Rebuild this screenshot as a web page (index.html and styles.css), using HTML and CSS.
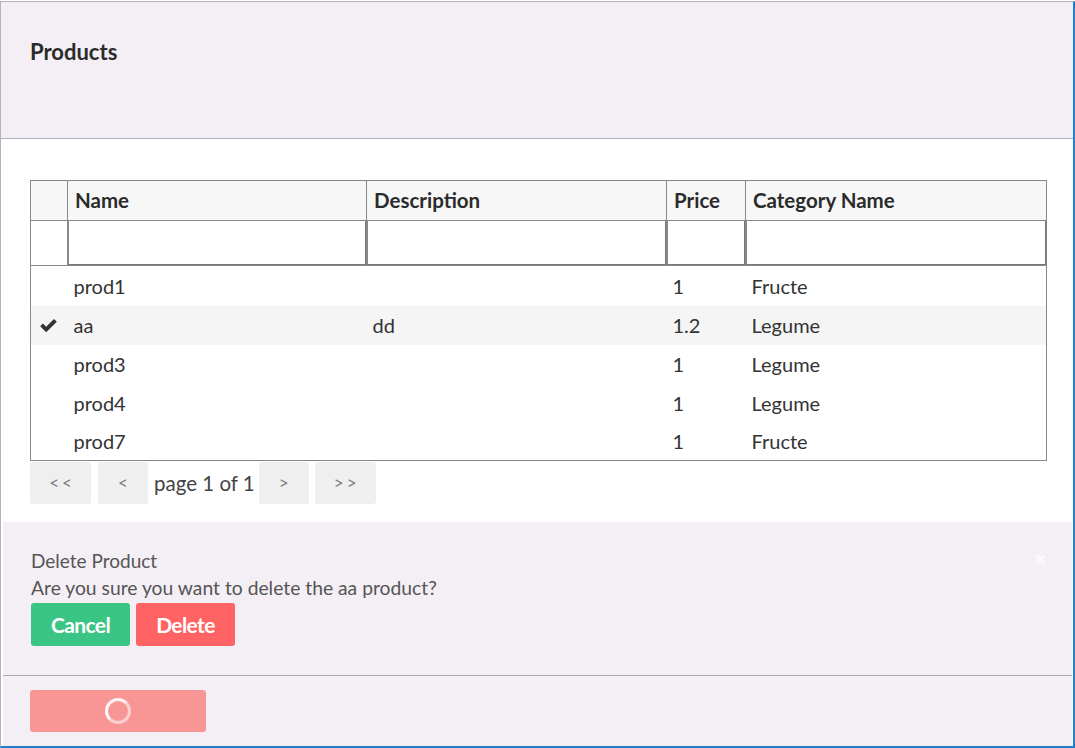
FILE: index.html
```html
<!DOCTYPE html>
<html>
<head>
<meta charset="utf-8">
<link rel="stylesheet" href="styles.css">
</head>
<body>
<div class="frame">
  <header class="page-head">
    <h1 class="title">Products</h1>
  </header>
  <main class="content">
    <table class="grid">
      <colgroup>
        <col class="c-sel"><col class="c-name"><col class="c-desc"><col class="c-price"><col class="c-cat">
      </colgroup>
      <thead>
        <tr class="head-row">
          <th></th><th>Name</th><th>Description</th><th>Price</th><th>Category Name</th>
        </tr>
        <tr class="filter-row">
          <th></th>
          <th><div class="filter"></div></th>
          <th><div class="filter"></div></th>
          <th><div class="filter"></div></th>
          <th><div class="filter"></div></th>
        </tr>
      </thead>
      <tbody>
        <tr class="first"><td></td><td>prod1</td><td></td><td>1</td><td>Fructe</td></tr>
        <tr class="selected"><td class="check"><svg width="19" height="15" viewBox="0 0 19 15"><path d="M1.2 8.2 L3.9 5.4 L7.2 8.7 L15 0.9 L17.8 3.7 L7.2 14.2 Z" fill="#333"/></svg></td><td>aa</td><td>dd</td><td>1.2</td><td>Legume</td></tr>
        <tr><td></td><td>prod3</td><td></td><td>1</td><td>Legume</td></tr>
        <tr><td></td><td>prod4</td><td></td><td>1</td><td>Legume</td></tr>
        <tr class="last"><td></td><td>prod7</td><td></td><td>1</td><td>Fructe</td></tr>
      </tbody>
    </table>
    <div class="pager">
      <button class="pg pg-wide">&lt;&lt;</button>
      <button class="pg pg-mid">&lt;</button>
      <span class="pg-text">page 1 of 1</span>
      <button class="pg pg-mid">&gt;</button>
      <button class="pg pg-wide">&gt;&gt;</button>
    </div>
  </main>
  <section class="dialog">
    <div class="dialog-body">
      <div class="dlg-title">Delete Product</div>
      <div class="dlg-text">Are you sure you want to delete the aa product?</div>
      <div class="dlg-actions">
        <button class="btn btn-cancel">Cancel</button>
        <button class="btn btn-delete">Delete</button>
      </div>
      <span class="close">&#x2716;</span>
    </div>
    <div class="dialog-foot">
      <button class="btn-busy"><span class="spinner"></span></button>
    </div>
  </section>
</div>
</body>
</html>
```
FILE: styles.css
```css
* { box-sizing: border-box; }
html, body { margin: 0; padding: 0; background: #fff; }
body {
  font-family: Lato, "Open Sans", sans-serif;
  color: #333;
  width: 1075px;
  height: 748px;
  overflow: hidden;
}
.frame {
  width: 1075px;
  height: 747px;
  margin-top: 1px;
  border-top: 1px solid #b4b4b4;
  border-left: 1px solid #b4b4b4;
  border-right: 2px solid #1f7ed0;
  border-bottom: 2px solid #1f7ed0;
  display: flex;
  flex-direction: column;
  position: relative;
}
.page-head {
  height: 137px;
  background: #f4eff5;
  border-top: 2px solid #efefef;
  border-bottom: 1px solid #b0b0b8;
  padding: 34px 0 0 29px;
}
.title {
  margin: 0;
  font-size: 22px;
  font-weight: 700;
  color: #2b2b2b;
  line-height: 28px;
}
.content {
  padding: 41px 0 0 29px;
}
.grid {
  border-collapse: collapse;
  width: 1017px;
  table-layout: fixed;
  font-size: 20px;
  border: 1px solid #888;
}
.c-sel { width: 37px; }
.c-name { width: 299px; }
.c-desc { width: 300px; }
.c-price { width: 79px; }
.c-cat { width: 301px; }
.head-row th {
  background: #f7f7f7;
  height: 40px;
  text-align: left;
  font-weight: 700;
  font-size: 20.5px;
  color: #2b2b2b;
  padding: 0 0 1px 7px;
  border: 1px solid #888;
}
.filter-row th {
  height: 45px;
  padding: 0;
  background: #fff;
  border-left: 1px solid #888;
  border-bottom: 1px solid #888;
}
.filter-row th:first-child { border-right: 1px solid #888; }
.filter {
  height: 44px;
  border: 1px solid #777;
  border-top: 0;
  border-left: 1px solid #888;
  background: #fff;
}
.grid tbody td {
  height: 39px;
  padding: 0 0 0 6px;
  color: #333;
  white-space: nowrap;
}
.grid tbody tr.first td { height: 40px; }
.grid tbody tr.last td { height: 38px; }
.grid tbody tr.selected td { background: #f5f5f5; }
.grid td.check { padding: 0 0 0 8px; }
.grid td.check svg { display: block; }
.pager {
  display: flex;
  align-items: center;
  height: 43px;
}
.pg {
  height: 42px;
  border: 0;
  border-radius: 3px;
  background: #efefef;
  color: #777;
  font-family: Lato, sans-serif;
  font-size: 17px;
  letter-spacing: 3px;
  padding: 0 0 0 3px;
}
.pg-wide { width: 61px; }
.pg-mid { width: 50px; }
.pager .pg:nth-child(2) { margin-left: 7px; }
.pager .pg:nth-child(4) { margin-left: 4px; }
.pager .pg:nth-child(5) { margin-left: 6px; }
.pg-text {
  font-size: 20.5px;
  color: #444;
  margin-left: 6px;
}
.dialog {
  margin-top: 18px;
  margin-left: 2px;
  margin-right: 1px;
  flex: 1;
  display: flex;
  flex-direction: column;
  background: #f4eff5;
}
.dialog-body {
  position: relative;
  height: 154px;
  border-top: 1px solid #efefef;
  border-bottom: 1px solid #aaaab0;
  padding: 26px 0 0 28px;
}
.dlg-title {
  font-size: 19px;
  color: #555;
  line-height: 24px;
}
.dlg-text {
  font-size: 19.3px;
  color: #555;
  line-height: 24px;
  margin-top: 3px;
}
.dlg-actions {
  display: flex;
  gap: 6px;
  margin-top: 3px;
  margin-left: 0;
}
.btn {
  width: 99px;
  height: 43px;
  border: 0;
  border-radius: 3px;
  color: #fff;
  font-family: Lato, sans-serif;
  font-weight: 700;
  font-size: 21px;
  letter-spacing: -0.6px;
}
.btn-cancel { background: #3ac585; }
.btn-delete { background: #ff6363; }
.close {
  position: absolute;
  right: 25px;
  top: 27px;
  font-size: 15px;
  color: #fbf9fc;
}
.dialog-foot {
  flex: 1;
  padding: 14px 0 0 27px;
}
.btn-busy {
  width: 176px;
  height: 42px;
  border: 0;
  border-radius: 3px;
  background: #f89595;
  display: flex;
  align-items: center;
  padding: 0 0 0 75px;
}
.spinner {
  width: 26px;
  height: 26px;
  border-radius: 50%;
  border: 3px solid rgba(255, 255, 255, 0.55);
  border-left-color: rgba(255, 255, 255, 0.95);
  border-top-color: rgba(255, 255, 255, 0.9);
  display: block;
}
```
